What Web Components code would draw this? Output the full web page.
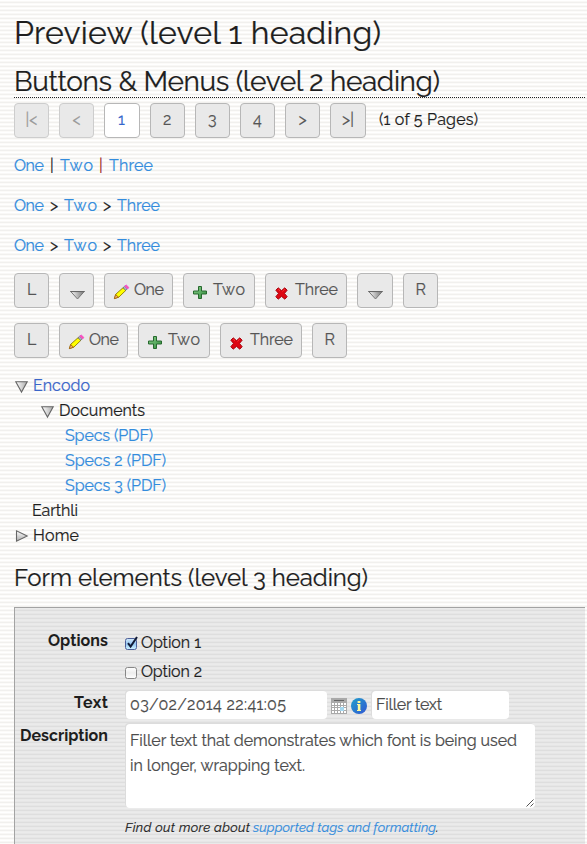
<!DOCTYPE html>
<html lang="en">
<head>
<meta charset="utf-8">
<title>Preview</title>
<style>
html,body{margin:0;height:844px;overflow:hidden}
body{font:16px/25px Raleway,Lato,"Open Sans",sans-serif;font-variant-numeric:oldstyle-nums;color:#1e1e1e;-webkit-text-stroke:.2px;
background:repeating-linear-gradient(to bottom,#fff 0 1px,#f9f8f6 1px 2px,#f1f0ee 2px 3px,#fcfbf9 3px 4px)}
</style>
</head>
<body>
<preview-page></preview-page>
<script>
const make=(name,css,html,init)=>customElements.define(name,class extends HTMLElement{
  connectedCallback(){
    if(this.shadowRoot)return;
    const a=n=>this.getAttribute(n);
    const r=this.attachShadow({mode:'open'});
    r.innerHTML='<style>'+css+'</style>'+(typeof html==='function'?html(a):html);
    if(init)init(this,a,r);
  }
});

/* A single line of text whose tracking is adjusted to fill the width "w". */
make('fit-text',':host{display:inline-block;white-space:pre;flex:none}:host([link]){color:#338cdd}:host([visited]){color:#3b66c9}:host([bold]){font-weight:700}','<slot></slot>',(el,a)=>{
  if(a('ml'))el.style.marginLeft=a('ml')+'px';
  const w=+a('w'),n=el.textContent.length;
  if(!w)return;
  const nat=el.getBoundingClientRect().width;
  el.style.letterSpacing=((w-nat)/(n>1?n-1:1))+'px';
  el.style.width=w+'px';
});

const icons={
 down:['15','9','<defs><linearGradient id="g"><stop stop-color="#fafafa"/><stop offset="1" stop-color="#777"/></linearGradient></defs><path d="M.8.6h13.4L7.5 8z" fill="url(#g)" stroke="#777" stroke-width="1"/><path d="M.3.5h14.4" stroke="#666"/>'],
 open:['14','12','<defs><linearGradient id="g"><stop stop-color="#fff"/><stop offset="1" stop-color="#aaa"/></linearGradient></defs><path d="M.8.7h11.4L6.5 11z" fill="url(#g)" stroke="#666" stroke-width="1.1"/>'],
 closed:['14','12','<defs><linearGradient id="g" x2="0" y2="1"><stop stop-color="#fff"/><stop offset="1" stop-color="#aaa"/></linearGradient></defs><path d="M1.5.8v10.4L12.2 6z" fill="url(#g)" stroke="#666" stroke-width="1.1"/>'],
 pencil:['15','14','<path d="M.6 13.4 1.8 9.2 9.2 2.6 12 5.2 4.8 12.2z" fill="#ff0" stroke="#8c7a00" stroke-width=".9"/><path d="M.3 13.7 1.6 9.6l2.9 2.6z" fill="#f2b36b" stroke="#9a5a08" stroke-width=".8"/><path d="M9 2.8 10.6 1.3 13.3 3.8 11.8 5.3z" fill="#aab6c6" stroke="#5c6470" stroke-width=".7"/><path d="M10.8 1 12.2 0 14.8 2.4 13.5 4z" fill="#f5a" stroke="#f050d0" stroke-width="1"/>'],
 plus:['14','13','<defs><linearGradient id="g" y2="1"><stop stop-color="#8bd08b"/><stop offset="1" stop-color="#2f8a3c"/></linearGradient></defs><path d="M5.5.5h3v4.5h5v3h-5v4.5h-3V8h-5V5h5z" fill="url(#g)" stroke="#27692e"/>'],
 cross:['13','13','<path d="M3.2.8 6.5 3.6 9.8.8l2.4 2.4L9.5 6.4l2.7 3.3-2.4 2.5-3.3-2.8-3.3 2.8L.8 9.7l2.7-3.3L.8 3.2z" fill="#dd0712" stroke="#a3000b" stroke-width=".9"/><path d="M3.2 2.2 5 3.8M9.8 2.2 7.4 4.4" stroke="#f33"/>'],
 calendar:['16','16','<path d="M0 0h16v16H0z" fill="#a9a9a9"/><path d="M3 2.5h10" stroke="#666"/><path d="M1 5h2v2H1zm3 0h2v2H4zm3 0h2v2H7zm3 0h2v2h-2zm3 0h2v2h-2zM1 8h2v1H1zm3 0h2v1H4zm3 0h2v1H7zm3 0h2v1h-2zm3 0h2v1h-2zM1 10h2v2H1zm3 0h2v2H4zm3 0h2v2H7zm6 0h2v2h-2zM1 13h2v2H1zm3 0h2v2H4zm3 0h2v2H7zm3 0h2v2h-2zm3 0h2v2h-2z" fill="#fff"/><path d="M9 9h4v4H9z" fill="#a5d8f0"/>'],
 info:['16','16','<defs><linearGradient id="g" y2="1"><stop stop-color="#1fa0cc"/><stop offset="1" stop-color="#3256d2"/></linearGradient></defs><circle cx="8" cy="8" r="8" fill="url(#g)"/><path d="M6.6 3h2.8v2H6.6zM6 6h3.4v6H10v1H6v-1h.8V7H6z" fill="#fdfa9c"/>'],
 check:['14','14','<defs><linearGradient id="g" x2="0" y2="1"><stop stop-color="#d5eafa"/><stop offset=".5" stop-color="#94c6f2"/><stop offset="1" stop-color="#d0f4ff"/></linearGradient></defs><rect x=".5" y="1.5" width="11" height="11" rx="2" fill="url(#g)" stroke="#4c5f99"/><path d="M3 6.2 5.6 9.5 12 0" fill="none" stroke="#101a35" stroke-width="2"/>'],
 box:['14','14','<defs><linearGradient id="g" x2="0" y2="1"><stop stop-color="#fff"/><stop offset=".5" stop-color="#ededed"/><stop offset="1" stop-color="#fff"/></linearGradient></defs><rect x=".5" y="2.5" width="11" height="11" rx="2" fill="url(#g)" stroke="#878787"/>']
};
make('ui-icon',':host{display:block;flex:none}svg{display:block;overflow:visible}',a=>{
  const [w,h,p]=icons[a('name')];
  return `<svg width="${w}" height="${h}" viewBox="0 0 ${w} ${h}">${p}</svg>`;
},(el,a)=>{el.style.marginTop=(a('mt')||0)+'px';el.style.marginLeft=(a('ml')||0)+'px'});

make('ui-row',':host{display:flex;align-items:flex-start}:host([h]){line-height:27px}','<slot></slot>',(el,a)=>{
  el.style.paddingLeft=(a('pl')||0)+'px';
  el.style.marginTop=(a('mt')||0)+'px';
  if(a('gap'))el.style.gap=a('gap')+'px';
  if(a('h'))el.style.height=a('h')+'px';
});

make('ui-button',`:host{display:flex;flex:none;box-sizing:border-box;height:35px;border:1px solid #b7b7b7;border-radius:4px;background:#e9e9e9;color:#555;align-items:flex-start;line-height:32px}
:host([center]){justify-content:center}
:host([page]){line-height:31px}
:host([off]){color:#999;border-color:#cdcdcd}
:host([current]){background:#fff;color:#3366cc}`,'<slot></slot>',(el,a)=>{el.style.width=(a('w')||35)+'px'});

make('ui-heading',`:host{display:block}h1,h2,h3{margin:0;font-weight:400}
h1{font-size:32px;line-height:44px;height:40px}h2{font-size:28px;line-height:38px;height:34px}h3{font-size:24px;line-height:32px;height:30px}
.rule{height:1px;background:repeating-linear-gradient(to right,#222 0 1px,transparent 1px 2px)}`,
 a=>`<h${a('level')}><slot></slot></h${a('level')}>`+(a('level')==='2'?'<div class="rule"></div>':''));

make('form-row',`:host{display:grid;grid-template-columns:93px 1fr;column-gap:17px}.l{text-align:right;justify-self:end;line-height:27px;-webkit-text-stroke:0}.c{padding-top:2px}`,
 a=>`<div class="l"><fit-text bold w="${a('lw')}">${a('label')}</fit-text></div><div class="c"><slot></slot></div>`,
 (el,a)=>{el.style.height=a('h')+'px'});

make('text-field',`:host{display:block;box-sizing:border-box;flex:none;background:#fff;border-radius:4px;color:#4c4c4c;box-shadow:-1px -1px 0 #dcdcdc;padding:0 0 0 4px}
svg{position:absolute;right:1px;bottom:1px}:host([area]){position:relative;padding-top:4px}`,
 a=>'<slot></slot>'+(a('area')!==null?'<svg width="8" height="8" viewBox="0 0 8 8"><path d="M.5 7.5l7-7M4.5 7.5l3-3" stroke="#555" fill="none"/></svg>':''),
 (el,a)=>{el.style.width=a('w')+'px';el.style.height=a('h')+'px'});

make('form-panel',':host{display:block;box-sizing:border-box;height:237px;border:solid #a3a3a3;border-width:1px 0 0 1px;padding-top:19px;width:571px;background:repeating-linear-gradient(to bottom,#ebebeb 0 1px,#e6e6e6 1px 2px,#dedede 2px 3px,#e9e9e9 3px 4px);background-position:0 0}','<slot></slot>');

const tool=(w,icon,im,it,t,tw,tm)=>`<ui-button w="${w}"><ui-icon name="${icon}" ml="${im}" mt="${it}"></ui-icon><fit-text ml="${tm}" w="${tw}">${t}</fit-text></ui-button>`;
const btn=(t,w,tw,x='')=>`<ui-button center w="${w}" ${x}><fit-text w="${tw}">${t}</fit-text></ui-button>`;
const arrow=w=>`<ui-button w="${w}"><ui-icon name="down" ml="10" mt="17"></ui-icon></ui-button>`;
const one=tool(69,'pencil',9,11,'One',30,5),two=tool(72,'plus',9,12,'Two',32,6),three=tool(82,'cross',9,13,'Three',43,7);
const crumbs=`<fit-text link w="30">One</fit-text><fit-text ml="6" w="9">&gt;</fit-text><fit-text link ml="5" w="33">Two</fit-text><fit-text ml="6" w="9">&gt;</fit-text><fit-text link ml="5" w="43">Three</fit-text>`;

make('preview-page',':host{display:block;padding:11px 0 0 14px;width:572px}',`
<ui-heading level="1"><fit-text w="367">Preview (level 1 heading)</fit-text></ui-heading>
<ui-heading level="2" style="margin-top:12px"><fit-text w="426">Buttons &amp; Menus (level 2 heading)</fit-text></ui-heading>
<ui-row mt="5" gap="10">${btn('|&lt;',35,12,'page off')}${btn('&lt;',35,8,'page off')}${btn('1',36,8,'page current')}${btn('2',35,9,'page')}${btn('3',35,9,'page')}${btn('4',35,9,'page')}${btn('&gt;',35,8,'page')}${btn('&gt;|',36,12,'page')}<fit-text ml="3" w="99" style="line-height:34px">(1 of 5 Pages)</fit-text></ui-row>
<ui-row mt="14" h="25"><fit-text link w="30">One</fit-text><fit-text ml="6" w="3">|</fit-text><fit-text link ml="7" w="33">Two</fit-text><fit-text ml="6" w="3" style="color:#9e2b1a">|</fit-text><fit-text link ml="7" w="44">Three</fit-text></ui-row>
<ui-row mt="15" h="25">${crumbs}</ui-row>
<ui-row mt="15" h="25">${crumbs}</ui-row>
<ui-row mt="16" gap="10">${btn('L',35,9)}${arrow(35)}${one}${two}${three}${arrow(36)}${btn('R',35,10)}</ui-row>
<ui-row mt="15" gap="10">${btn('L',35,9)}${one}${two}${three}${btn('R',35,10)}</ui-row>
<ui-row mt="14" h="25" pl="1"><ui-icon name="open" mt="9"></ui-icon><fit-text visited ml="4" w="57">Encodo</fit-text></ui-row>
<ui-row h="25" pl="27"><ui-icon name="open" mt="9"></ui-icon><fit-text ml="4" w="86">Documents</fit-text></ui-row>
<ui-row h="25" pl="51"><fit-text link w="88">Specs (PDF)</fit-text></ui-row>
<ui-row h="25" pl="51"><fit-text link w="101">Specs 2 (PDF)</fit-text></ui-row>
<ui-row h="25" pl="51"><fit-text link w="101">Specs 3 (PDF)</fit-text></ui-row>
<ui-row h="25" pl="18"><fit-text w="46">Earthli</fit-text></ui-row>
<ui-row h="25" pl="1"><ui-icon name="closed" mt="8"></ui-icon><fit-text ml="4" w="46">Home</fit-text></ui-row>
<ui-heading level="3" style="margin-top:15px"><fit-text w="354">Form elements (level 3 heading)</fit-text></ui-heading>
<form-panel style="margin-top:15px">
 <form-row label="Options" lw="60" h="62">
  <ui-row h="25"><ui-icon name="check" mt="8"></ui-icon><fit-text ml="2" w="60">Option 1</fit-text></ui-row>
  <ui-row mt="4" h="25"><ui-icon name="box" mt="7"></ui-icon><fit-text ml="2" w="61">Option 2</fit-text></ui-row>
 </form-row>
 <form-row label="Text" lw="34" h="33">
  <ui-row pl="1"><text-field w="201" h="28"><fit-text w="156" style="line-height:28px">03/02/2014 22:41:05</fit-text></text-field><ui-icon name="calendar" ml="4" mt="7"></ui-icon><ui-icon name="info" ml="4" mt="7"></ui-icon><text-field style="margin-left:5px" w="137" h="28"><fit-text w="66" style="line-height:27px">Filler text</fit-text></text-field></ui-row>
 </form-row>
 <form-row label="Description" lw="88" h="122">
  <ui-row pl="1"><text-field area w="409" h="84"><fit-text w="387">Filler text that demonstrates which font is being used</fit-text><br><fit-text w="175">in longer, wrapping text.</fit-text></text-field></ui-row>
  <ui-row mt="7" style="font-size:13px;font-style:italic"><fit-text w="125">Find out more about</fit-text><fit-text link ml="3" w="183">supported tags and formatting</fit-text><fit-text>.</fit-text></ui-row>
 </form-row>
</form-panel>`);
</script>
</body>
</html>
